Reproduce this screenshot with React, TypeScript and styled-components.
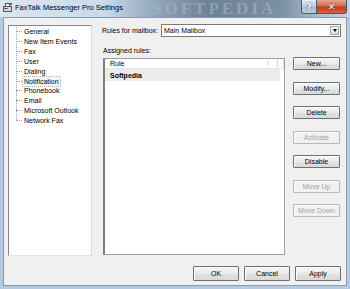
import React from "react";
import styled, { createGlobalStyle } from "styled-components";

const Global = createGlobalStyle`
  html, body { margin: 0; padding: 0; }
  body { width: 350px; height: 289px; overflow: hidden; font-family: "Liberation Sans", Arial, sans-serif; }
  * { box-sizing: border-box; }
`;

const Window = styled.div`
  width: 350px;
  height: 289px;
  display: flex;
  flex-direction: column;
  background: #b6cbe1;
  position: relative;
  overflow: hidden;
`;

const TitleBar = styled.div`
  height: 17px;
  flex: none;
  display: flex;
  align-items: flex-start;
  position: relative;
  background: linear-gradient(90deg, #dbe6f1 0%, #c9d9e9 30%, #8fa4b9 45%, #6c8196 60%, #7b90a5 80%, #aebfd1 92%, #c4d4e4 100%);
`;

const Watermark = styled.div`
  position: absolute;
  left: 152px;
  top: 0;
  height: 17px;
  line-height: 17px;
  font-family: "Liberation Serif", serif;
  font-weight: bold;
  font-size: 17px;
  letter-spacing: 3px;
  color: rgba(170, 188, 206, 0.55);
  pointer-events: none;
`;

const AppIcon = styled.svg`
  margin: 3px 3px 0 3px;
  flex: none;
`;

const Title = styled.span`
  font-family: "Liberation Sans", Arial, sans-serif;
  font-size: 7.5px;
  color: #000;
  margin-top: 3px;
  position: relative;
`;

const Spacer = styled.div`
  flex: 1;
`;

const Caption = styled.div`
  display: flex;
  margin-right: 3px;
  position: relative;
`;

const CapButton = styled.div<{ $close?: boolean }>`
  width: ${(p) => (p.$close ? 30 : 16)}px;
  height: 14px;
  border: 1px solid #4b5a6c;
  border-top: none;
  border-radius: ${(p) => (p.$close ? "0 0 3px 0" : "0 0 0 3px")};
  ${(p) => (p.$close ? "border-left: none;" : "")}
  background: ${(p) =>
    p.$close
      ? "linear-gradient(#e8a493 0%, #d46a55 45%, #c2391f 55%, #d4604a 100%)"
      : "linear-gradient(#e6edf5 0%, #c3d1e0 45%, #a9bbcf 55%, #c0d0e2 100%)"};
  display: flex;
  align-items: center;
  justify-content: center;
  color: #fff;
  font-family: "DejaVu Sans", sans-serif;
  font-weight: bold;
  font-size: 9px;
  text-shadow: 0 0 2px #333;
`;

const Client = styled.div`
  flex: 1;
  margin: 0 3px 3px 3px;
  background: #f0f0f0;
  border: 1px solid #8a9bb0;
  display: flex;
  flex-direction: column;
  padding: 7px 5px 4px 4px;
  font-family: "Liberation Sans", Arial, sans-serif;
  font-size: 7px;
  color: #000;
`;

const Main = styled.div`
  flex: 1;
  display: flex;
  align-items: flex-start;
  min-height: 0;
`;

const Tree = styled.div`
  width: 84px;
  height: 231px;
  flex: none;
  background: #fff;
  border: 1px solid #828790;
  border-right-color: #d9d9d9;
  border-bottom-color: #e3e3e3;
  padding: 1px 0 0 7px;
`;

const TreeList = styled.div`
  display: flex;
  flex-direction: column;
  position: relative;
  &::before {
    content: "";
    position: absolute;
    left: 0;
    top: 0;
    bottom: 5px;
    border-left: 1px dotted #a0a0a0;
  }
`;

const TreeItem = styled.div<{ $focus?: boolean }>`
  height: 9.85px;
  flex: none;
  display: flex;
  align-items: center;
  &::before {
    content: "";
    width: 6px;
    flex: none;
    border-top: 1px dotted #a0a0a0;
    margin-right: 1px;
  }
  span {
    padding: 0 1px;
    line-height: 9px;
    white-space: nowrap;
    ${(p) => (p.$focus ? "outline: 1px dotted #b0b0b0; background: #f6f6f6;" : "")}
  }
`;

const Right = styled.div`
  flex: 1;
  display: flex;
  flex-direction: column;
  margin-left: 10px;
`;

const MailboxRow = styled.div`
  display: flex;
  align-items: center;
  height: 13px;
  margin-top: -1px;
`;

const Label = styled.span`
  white-space: nowrap;
`;

const Combo = styled.div`
  margin-left: 3px;
  flex: 1;
  height: 13px;
  background: #fff;
  border: 1px solid #7a7a7a;
  display: flex;
  align-items: center;
  padding-left: 2px;
`;

const ComboText = styled.span`
  flex: 1;
`;

const ComboArrow = styled.div`
  width: 9px;
  height: 9px;
  margin-right: 1px;
  background: linear-gradient(#f6f6f6, #dcdcdc);
  border: 1px solid #a8a8a8;
  display: flex;
  align-items: center;
  justify-content: center;
  &::after {
    content: "";
    border-left: 2.5px solid transparent;
    border-right: 2.5px solid transparent;
    border-top: 3px solid #000;
  }
`;

const AssignedLabel = styled.div`
  margin: 9px 0 3px 1px;
  height: 9px;
  line-height: 9px;
`;

const ListRow = styled.div`
  display: flex;
  flex: 1;
  align-items: flex-start;
`;

const ListView = styled.div`
  width: 182px;
  height: 197px;
  margin-left: 1px;
  background: #fff;
  border: 1px solid #a0a0a0;
  border-left: 2px solid #7f7f7f;
  display: flex;
  flex-direction: column;
`;

const Header = styled.div`
  display: flex;
  height: 10px;
  border-bottom: 1px solid #e5e5e5;
`;

const HeaderCell = styled.div<{ $grow?: boolean }>`
  ${(p) => (p.$grow ? "width: 175px;" : "flex: 1;")}
  display: flex;
  align-items: center;
  padding-left: 5px;
  border-right: 1px solid #dcdcdc;
  position: relative;
`;

const SortMark = styled.span`
  position: absolute;
  right: 8px;
  top: 1px;
  color: #9a9a9a;
  font-size: 6px;
`;

const RuleRow = styled.div`
  width: 175px;
  height: 12px;
  background: #ececec;
  display: flex;
  align-items: center;
  padding-left: 5px;
  font-weight: bold;
`;

const SideButtons = styled.div`
  display: flex;
  flex-direction: column;
  gap: 11.5px;
  margin-left: 8px;
  margin-top: -1px;
`;

const Button = styled.div<{ $disabled?: boolean; $tall?: boolean }>`
  width: ${(p) => (p.$tall ? 46 : 47)}px;
  height: ${(p) => (p.$tall ? 15 : 13)}px;
  display: flex;
  align-items: center;
  justify-content: center;
  border: 1px solid ${(p) => (p.$disabled ? "#b8b8b8" : "#707070")};
  border-radius: 1px;
  background: ${(p) => (p.$disabled ? "#f1f1f1" : "linear-gradient(#f6f6f6 0%, #ebebeb 50%, #e1e1e1 51%, #d9d9d9 100%)")};
  box-shadow: inset 1px 1px 0 #fcfcfc;
  color: ${(p) => (p.$disabled ? "#a3a3a3" : "#000")};
  white-space: nowrap;
`;

const Footer = styled.div`
  display: flex;
  justify-content: flex-end;
  gap: 5px;
  margin-top: 7px;
`;

const FaxIcon = () => (
  <AppIcon width="9" height="9" viewBox="0 0 9 9">
    <rect x="0.5" y="3.5" width="8" height="5" fill="#d8d8d8" stroke="#555" />
    <rect x="2.5" y="0.5" width="4" height="3" fill="#fff" stroke="#555" />
    <rect x="6" y="0" width="3" height="2" fill="#2a62c9" />
    <rect x="1.5" y="5" width="3" height="1" fill="#3a3a3a" />
  </AppIcon>
);

const treeItems = [
  "General",
  "New Item Events",
  "Fax",
  "User",
  "Dialing",
  "Notification",
  "Phonebook",
  "Email",
  "Microsoft Outlook",
  "Network Fax",
];

const sideButtons: { label: string; disabled?: boolean }[] = [
  { label: "New..." },
  { label: "Modify..." },
  { label: "Delete" },
  { label: "Activate", disabled: true },
  { label: "Disable" },
  { label: "Move Up", disabled: true },
  { label: "Move Down", disabled: true },
];

export default function App() {
  return (
    <>
      <Global />
      <Window>
        <TitleBar>
          <Watermark>SOFTPEDIA</Watermark>
          <FaxIcon />
          <Title>FaxTalk Messenger Pro Settings</Title>
          <Spacer />
          <Caption>
            <CapButton>?</CapButton>
            <CapButton $close>✕</CapButton>
          </Caption>
        </TitleBar>
        <Client>
          <Main>
            <Tree>
              <TreeList>
                {treeItems.map((t) => (
                  <TreeItem key={t} $focus={t === "Notification"}>
                    <span>{t}</span>
                  </TreeItem>
                ))}
              </TreeList>
            </Tree>
            <Right>
              <MailboxRow>
                <Label>Rules for mailbox:</Label>
                <Combo>
                  <ComboText>Main Mailbox</ComboText>
                  <ComboArrow />
                </Combo>
              </MailboxRow>
              <AssignedLabel>Assigned rules:</AssignedLabel>
              <ListRow>
                <ListView>
                  <Header>
                    <HeaderCell $grow>
                      Rule
                      <SortMark>/</SortMark>
                    </HeaderCell>
                    <HeaderCell />
                  </Header>
                  <RuleRow>Softpedia</RuleRow>
                </ListView>
                <SideButtons>
                  {sideButtons.map((b) => (
                    <Button key={b.label} $disabled={b.disabled}>
                      {b.label}
                    </Button>
                  ))}
                </SideButtons>
              </ListRow>
            </Right>
          </Main>
          <Footer>
            <Button $tall>OK</Button>
            <Button $tall>Cancel</Button>
            <Button $tall>Apply</Button>
          </Footer>
        </Client>
      </Window>
    </>
  );
}
